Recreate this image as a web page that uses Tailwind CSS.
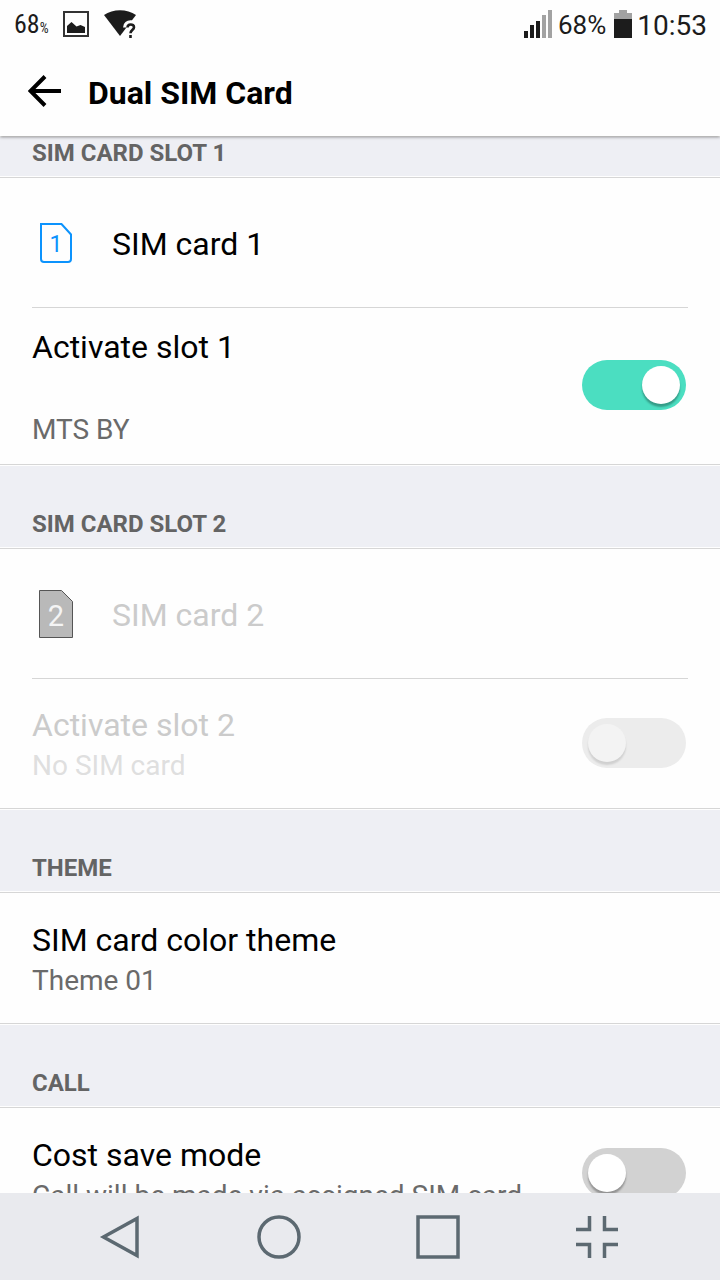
<!DOCTYPE html>
<html lang="en">
<head>
<meta charset="utf-8">
<meta name="viewport" content="width=device-width, initial-scale=1">
<title>Dual SIM Card</title>
<script src="https://cdn.jsdelivr.net/npm/@tailwindcss/browser@4"></script>
</head>
<body class="h-screen flex flex-col overflow-hidden bg-[#fefefe] text-black font-['Roboto',sans-serif]">

<div class="relative z-20 shrink-0 flex items-center justify-between h-12 pl-[14px] pr-[13px] bg-[#fefefe] text-[#1c1c1c]">
  <div class="flex items-center">
    <span class="flex items-baseline w-[49px] font-['Roboto_Condensed','Open_Sans_Condensed','Noto_Sans',sans-serif] text-[26px]">68<span class="text-sm">%</span></span>
    <svg class="w-[26px] h-[26px]" viewBox="0 0 26 26" aria-hidden="true"><rect x="1" y="1" width="24" height="24" fill="none" stroke="#333" stroke-width="2"/><path d="M4 22v-7l4.500-4 5 4.500 4-1.500 4.500 2V22Z" fill="#1c1c1c"/></svg>
    <svg class="ml-[15px] w-8 h-7" viewBox="0 0 32 28" aria-hidden="true"><path d="M0 5C9-1.500 23-1.500 32 5L16 26Z" fill="#1c1c1c"/><path d="M22 17.500c0-5.500 9-5.500 9-.5 0 3.500-4.300 3-4.300 6.500M26.700 25v3" fill="none" stroke="#fefefe" stroke-width="6"/><path d="M23.500 17.500c0-4 6.500-4 6.500-.3 0 2.800-3.500 3-3.500 6M26.500 25v3" fill="none" stroke="#1c1c1c" stroke-width="2.600"/></svg>
  </div>
  <div class="flex items-center text-[28px]">
    <svg class="w-7 h-7" viewBox="0 0 28 28" aria-hidden="true"><path d="M0 21h4v7H0ZM6 15h4v13H6ZM12 11h4v17h-4Z" fill="#1c1c1c"/><path d="M18 5h4v23h-4ZM24 0h4v28h-4Z" fill="#a2a2a2"/></svg>
    <span class="ml-[6px] pt-[3px] text-[26px]">68%</span>
    <svg class="ml-2 w-[18px] h-7" viewBox="0 0 18 28" aria-hidden="true"><path d="M5 0h8v3h5v6H0V3h5Z" fill="#a2a2a2"/><path d="M0 9h18v19H0Z" fill="#1c1c1c"/></svg>
    <span class="ml-[5px] pt-[3px]">10:53</span>
  </div>
</div>

<header class="relative z-10 shrink-0 flex items-center h-[88px] px-7 bg-[#fefefe] shadow-[0_1px_3px_rgba(0,0,0,0.45)]">
  <button type="button" aria-label="Back"><svg class="mb-[2px] w-[33px] h-8" viewBox="0 0 33 32"><path d="M17 1.500 2.500 16 17 30.500M2.500 16H33" fill="none" stroke="#000" stroke-width="4"/></svg></button>
  <h1 class="ml-[27px] pt-[2px] text-[32px] leading-10 font-bold">Dual SIM Card</h1>
</header>

<main class="flex-1 min-h-0 overflow-hidden">
  <section>
    <div class="flex items-end h-[42px] border-b border-[#d6d6d6]">
      <h2 class="w-full px-8 pb-[7px] mb-px bg-[#eeeff4] text-2xl leading-8 font-bold text-[#646464]">SIM CARD SLOT 1</h2>
    </div>
    <button type="button" class="flex items-center w-full h-[130px] px-8 text-left">
      <span class="flex items-center w-full h-full border-b border-[#d6d6d6]">
        <svg class="ml-2 w-8 h-10" viewBox="0 0 32 40"><path d="M1 1h20.500L31 11.500V36a3 3 0 0 1-3 3H4a3 3 0 0 1-3-3Z" fill="none" stroke="#0c93fd" stroke-width="2"/><text x="16" y="29" text-anchor="middle" font-size="23" fill="#0c93fd">1</text></svg>
        <span class="ml-10 pt-[2px] text-[32px] leading-10">SIM card 1</span>
      </span>
    </button>
    <div class="flex items-center justify-between h-[156px] pb-[2px] pl-8 pr-[34px]">
      <label for="slot1" class="flex flex-col gap-[43px] pt-[7px] text-[32px] leading-10">Activate slot 1<span class="text-[28px] text-[#6a6a6a]">MTS BY</span></label>
      <input id="slot1" type="checkbox" role="switch" checked class="appearance-none shrink-0 flex items-center w-[104px] h-[50px] px-[6px] rounded-full bg-[#d2d2d2] checked:bg-[#4bdec1] checked:justify-end before:size-[38px] before:rounded-full before:bg-white before:shadow-[0_3px_2px_rgba(0,0,0,0.3)]">
    </div>
  </section>

  <section>
    <div class="flex items-end h-[85px] border-y border-[#d6d6d6]">
      <div class="flex items-end w-full h-[81px] mb-px px-8 pb-[7px] bg-[#eeeff4]"><h2 class="text-2xl leading-8 font-bold text-[#646464]">SIM CARD SLOT 2</h2></div>
    </div>
    <button type="button" disabled class="flex items-center w-full h-[130px] px-8 text-left">
      <span class="flex items-center w-full h-full border-b border-[#d6d6d6]">
        <svg class="ml-[7px] w-[34px] h-12" viewBox="0 0 34 48"><path d="M.5.500H22.500L33.500 11.500V47.500H.5Z" fill="#b9b9b9" stroke="#555"/><text x="17" y="36" text-anchor="middle" font-size="29" fill="#f4f4f4">2</text></svg>
        <span class="ml-[39px] pt-[2px] text-[32px] leading-10 text-[#cbcbcb]">SIM card 2</span>
      </span>
    </button>
    <div class="flex items-center justify-between h-[129px] pb-[2px] pl-8 pr-[34px]">
      <label for="slot2" class="flex flex-col gap-px pt-[6px] text-[32px] leading-10 text-[#cbcbcb]">Activate slot 2<span class="text-[28px] text-[#dfdfdf]">No SIM card</span></label>
      <input id="slot2" type="checkbox" role="switch" disabled class="appearance-none shrink-0 flex items-center w-[104px] h-[50px] px-[6px] rounded-full bg-[#ececec] before:size-[38px] before:rounded-full before:bg-[#f3f3f3] before:shadow-[0_3px_2px_rgba(0,0,0,0.12)]">
    </div>
  </section>

  <section>
    <div class="flex items-end h-[85px] border-y border-[#d6d6d6]">
      <div class="flex items-end w-full h-[81px] mb-px px-8 pb-[7px] bg-[#eeeff4]"><h2 class="text-2xl leading-8 font-bold text-[#646464]">THEME</h2></div>
    </div>
    <button type="button" class="flex flex-col justify-center gap-px w-full h-[130px] px-8 pt-[5px] text-left text-[32px] leading-10">SIM card color theme<span class="text-[28px] text-[#6a6a6a]">Theme 01</span></button>
  </section>

  <section>
    <div class="flex items-end h-[85px] border-y border-[#d6d6d6]">
      <div class="flex items-end w-full h-[81px] mb-px px-8 pb-[7px] bg-[#eeeff4]"><h2 class="text-2xl leading-8 font-bold text-[#646464]">CALL</h2></div>
    </div>
    <div class="flex items-center justify-between h-[130px] pl-8 pr-[34px]">
      <label for="cost" class="flex flex-col gap-px pt-[5px] text-[32px] leading-10">Cost save mode<span class="text-[28px] text-[#6a6a6a]">Call will be made via assigned SIM card</span></label>
      <input id="cost" type="checkbox" role="switch" class="appearance-none shrink-0 flex items-center w-[104px] h-[50px] px-[6px] rounded-full bg-[#d2d2d2] checked:bg-[#4bdec1] checked:justify-end before:size-[38px] before:rounded-full before:bg-white before:shadow-[0_3px_2px_rgba(0,0,0,0.3)]">
    </div>
  </section>
</main>

<nav class="relative z-10 shrink-0 grid grid-cols-4 justify-items-center items-center h-[87px] pl-10 pr-11 bg-[#e9eaee]" aria-label="System">
  <button type="button" aria-label="Back"><svg class="w-11 h-11" viewBox="0 0 44 44" fill="none" stroke="#5c6971" stroke-width="3.500"><path d="M39 3.500V40.500L5.500 22Z"/></svg></button>
  <button type="button" aria-label="Home"><svg class="w-11 h-11" viewBox="0 0 44 44" fill="none" stroke="#5c6971" stroke-width="3.500"><circle cx="22" cy="22" r="20"/></svg></button>
  <button type="button" aria-label="Recent apps"><svg class="w-11 h-11" viewBox="0 0 44 44" fill="none" stroke="#5c6971" stroke-width="3.500"><path d="M2 2H42V42H2Z"/></svg></button>
  <button type="button" aria-label="Exit full screen"><svg class="w-11 h-11" viewBox="0 0 44 44" fill="none" stroke="#5c6971" stroke-width="3.500"><path d="M14.500 1V14.500H1M29.500 1V14.500H43M1 29.500H14.500V43M43 29.500H29.500V43"/></svg></button>
</nav>
</body>
</html>
